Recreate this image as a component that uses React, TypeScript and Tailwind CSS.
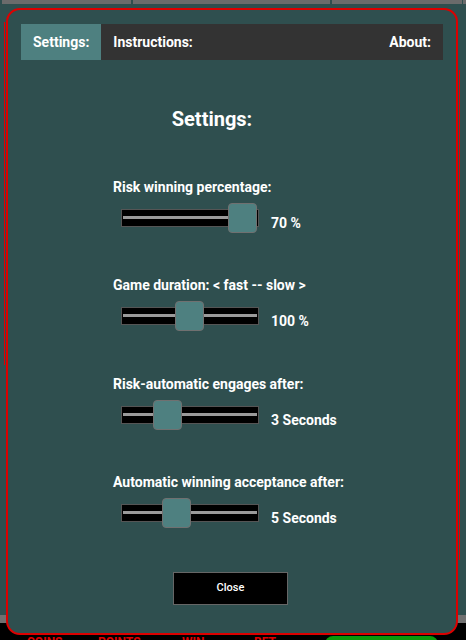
import React from 'react';

const settings = [
  { label: 'Risk winning percentage:', value: '70 %', thumb: 'left-[106px]' },
  { label: 'Game duration: < fast -- slow >', value: '100 %', thumb: 'left-[53px]' },
  { label: 'Risk-automatic engages after:', value: '3 Seconds', thumb: 'left-[31px]' },
  { label: 'Automatic winning acceptance after:', value: '5 Seconds', thumb: 'left-[40px]' },
];

function Slider({ label, value, thumb }: { label: string; value: string; thumb: string }) {
  return (
    <div className="flex flex-col">
      <div className="text-[14px] leading-[16px] font-bold text-white">{label}</div>
      <div className="mt-[8px] flex h-[30px] items-start">
        <div className="relative ml-[8px] mt-[6px] h-[18px] w-[138px] border border-[#555] bg-black">
          <div className="absolute left-[1px] right-[1px] top-[6px] h-[3px] bg-[#9a9a9a]" />
          <div
            className={`absolute top-[-7px] h-[30px] w-[29px] rounded-[4px] border border-[#707070] bg-[#4e8080] ${thumb}`}
          />
        </div>
        <span className="ml-[12px] mt-[12px] text-[14px] leading-[16px] font-bold text-white">{value}</span>
      </div>
    </div>
  );
}

export default function App() {
  return (
    <div
      className="relative flex h-[640px] w-[466px] flex-col overflow-hidden bg-[#2f4f4f]"
      style={{ fontFamily: 'Roboto, "Liberation Sans", sans-serif' }}
    >
      {/* top bars behind the dialog */}
      <div className="flex h-[4px] gap-[2px] pl-[2px]">
        <div className="w-[129px] bg-[#6b6b6b]" />
        <div className="w-[197px] bg-[#6b6b6b]" />
        <div className="w-[130px] bg-[#6b6b6b]" />
        <div className="ml-[-1px] flex-1 bg-[#6b6b6b]" />
      </div>
      <div className="flex-1" />
      <div className="h-[8px] bg-[#707070]" />
      <div className="flex h-[17px] bg-black pl-[27px] pt-[12px] text-[12px] leading-[14px] font-bold text-[#e00000]">
        <span className="w-[71px]">COINS</span>
        <span className="w-[84px]">POINTS</span>
        <span className="w-[72px]">WIN</span>
        <span className="w-[71px]">BET</span>
        <div className="mt-[1px] h-[10px] w-[113px] rounded-t-[8px] bg-[#0b990b]" />
      </div>

      {/* stray borders of the layer underneath */}
      <div className="absolute left-[4px] top-[22px] h-[343px] w-[1px] bg-[#e00000]" />
      <div className="absolute left-[459px] top-[70px] h-[490px] w-[1px] bg-[#e00000]" />

      {/* dialog */}
      <div className="absolute left-[6px] top-[8px] flex h-[627px] w-[452px] flex-col rounded-[14px] border-2 border-[#dd0000] bg-[#2f4f4f] px-[13px] pt-[14px]">
        <div className="flex h-[36px] items-center bg-[#333333] text-[14px] font-bold text-white">
          <div className="flex h-full items-center bg-[#4e8080] px-[12px]">Settings:</div>
          <div className="px-[12px]">Instructions:</div>
          <div className="ml-auto px-[12px]">About:</div>
        </div>

        <div className="flex flex-col pl-[92px]">
          <h2 className="mt-[47px] w-[198px] text-center text-[20px] leading-[24px] font-bold text-white">Settings:</h2>
          <div className="mt-[47.5px] flex flex-col gap-[44.5px]">
            {settings.map((s) => (
              <Slider key={s.label} {...s} />
            ))}
          </div>
          <button className="ml-[60px] mt-[44px] flex h-[33px] w-[115px] items-center justify-center border border-[#666] bg-black text-[11px] font-medium text-white">
            Close
          </button>
        </div>
      </div>
    </div>
  );
}
